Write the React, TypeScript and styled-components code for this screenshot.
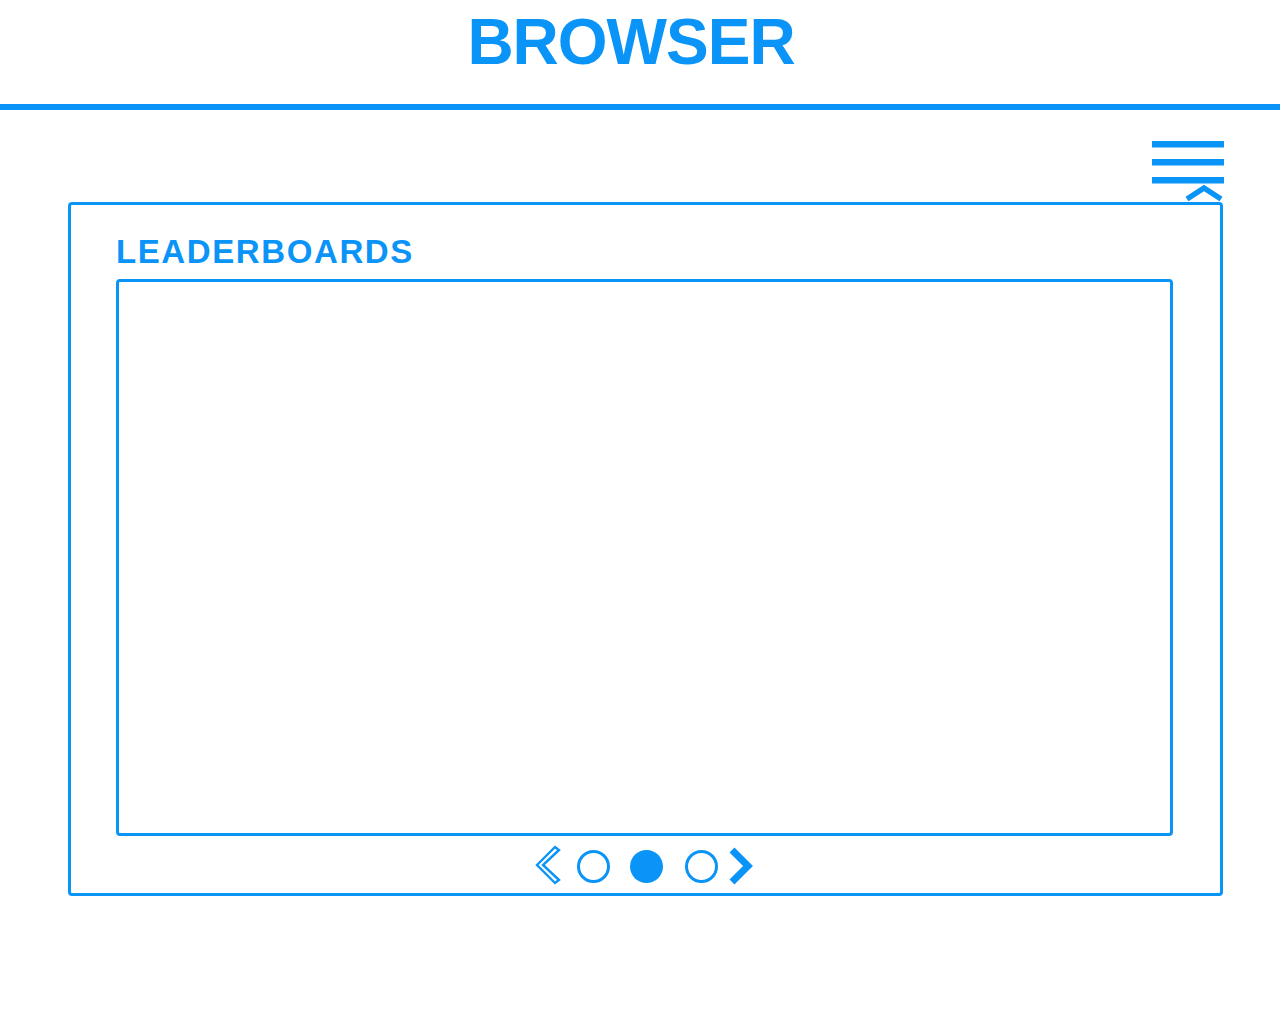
import React from "react";
import styled, { createGlobalStyle } from "styled-components";

const BLUE = "#0a94f7";

const GlobalStyle = createGlobalStyle`
  html, body {
    margin: 0;
    padding: 0;
    background: #ffffff;
  }
  body {
    font-family: "Liberation Sans", Arial, Helvetica, sans-serif;
  }
`;

const Page = styled.div`
  width: 1280px;
  min-height: 1024px;
  background: #ffffff;
`;

const Header = styled.header`
  padding-top: 10px;
`;

const Title = styled.h1`
  margin: 0;
  padding-right: 18px;
  font-size: 64px;
  line-height: 64px;
  font-weight: 700;
  text-align: center;
  letter-spacing: -1px;
  color: ${BLUE};
`;

const Rule = styled.div`
  margin-top: 30px;
  height: 6px;
  background: ${BLUE};
`;

const Main = styled.main`
  padding: 31px 57px 0 68px;
`;

const MenuRow = styled.div`
  display: flex;
  justify-content: flex-end;
  height: 42px;
  margin-right: -1px;
`;

const MenuButton = styled.button`
  display: block;
  width: 72px;
  height: 42px;
  padding: 0;
  border: 0;
  background: transparent;
  cursor: pointer;
  svg {
    display: block;
    overflow: visible;
  }
`;

const Panel = styled.section`
  margin-top: 19px;
  border: 3px solid ${BLUE};
  border-radius: 4px;
  padding: 30px 47px 10px 45px;
`;

const PanelTitle = styled.h2`
  margin: 0;
  font-size: 33px;
  line-height: 33px;
  font-weight: 700;
  letter-spacing: 1.6px;
  color: ${BLUE};
`;

const Board = styled.div`
  box-sizing: border-box;
  margin-top: 11px;
  height: 557px;
  border: 3px solid ${BLUE};
  border-radius: 4px;
`;

const Pager = styled.nav`
  display: flex;
  align-items: center;
  justify-content: center;
  height: 34px;
  padding-top: 13px;
  margin-left: 2px;
`;

const Arrow = styled.button<{ $gap: number }>`
  display: block;
  padding: 0;
  border: 0;
  background: transparent;
  margin-left: ${(p) => p.$gap}px;
  cursor: pointer;
  svg {
    display: block;
    overflow: visible;
  }
`;

const Dot = styled.span<{ $active?: boolean; $gap: number }>`
  display: block;
  box-sizing: border-box;
  width: 33px;
  height: 33px;
  border-radius: 50%;
  margin-left: ${(p) => p.$gap}px;
  border: ${(p) => (p.$active ? "none" : `3.5px solid ${BLUE}`)};
  background: ${(p) => (p.$active ? BLUE : "transparent")};
`;

export default function App() {
  return (
    <Page>
      <GlobalStyle />
      <Header>
        <Title>BROWSER</Title>
        <Rule />
      </Header>
      <Main>
        <MenuRow>
          <MenuButton aria-label="Menu">
            <svg width="72" height="42" viewBox="0 0 72 42">
              <rect x="0" y="0" width="72" height="6.5" fill={BLUE} />
              <rect x="0" y="18" width="72" height="6.5" fill={BLUE} />
              <rect x="0" y="36" width="72" height="6.5" fill={BLUE} />
              <polyline
                points="35,58 52,47 69,58"
                fill="none"
                stroke={BLUE}
                strokeWidth="5.5"
              />
            </svg>
          </MenuButton>
        </MenuRow>
        <Panel>
          <PanelTitle>LEADERBOARDS</PanelTitle>
          <Board />
          <Pager>
            <Arrow $gap={0} aria-label="Previous">
              <svg width="26" height="40" viewBox="0 0 26 40">
                <polygon
                  points="1,19 19,1 23,4 7,19 23,34 19,37"
                  fill="none"
                  stroke={BLUE}
                  strokeWidth="2.4"
                  strokeLinejoin="miter"
                />
              </svg>
            </Arrow>
            <Dot $gap={15} />
            <Dot $gap={20} $active />
            <Dot $gap={22} />
            <Arrow $gap={9} aria-label="Next">
              <svg width="28" height="38" viewBox="0 0 28 38">
                <polyline
                  points="5,3 21,19 5,35"
                  fill="none"
                  stroke={BLUE}
                  strokeWidth="7"
                  strokeLinejoin="miter"
                />
              </svg>
            </Arrow>
          </Pager>
        </Panel>
      </Main>
    </Page>
  );
}
